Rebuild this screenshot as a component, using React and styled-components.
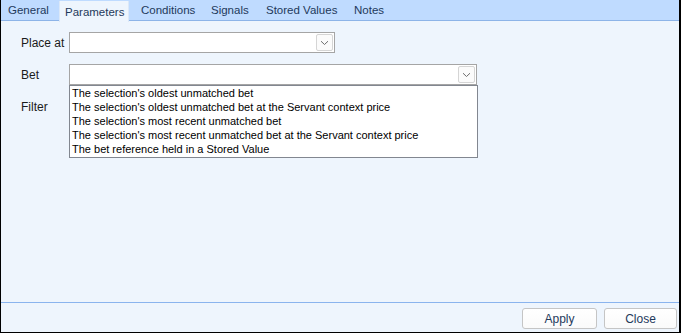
import React from "react";
import styled, { createGlobalStyle } from "styled-components";

const Global = createGlobalStyle`
  html, body { margin: 0; padding: 0; background: #ffffff; }
  * { box-sizing: border-box; }
`;

const Window = styled.div`
  width: 681px;
  height: 333px;
  display: flex;
  flex-direction: column;
  background: #eef5fd;
  border-left: 1px solid #000;
  border-right: 2px solid #000;
  border-bottom: 1px solid #000;
  font-family: "Liberation Sans", Arial, sans-serif;
  font-size: 12px;
  color: #000;
`;

const TabStrip = styled.div`
  display: flex;
  height: 21px;
  background: #bfdbff;
  border-bottom: 1px solid #8db4e8;
  flex-shrink: 0;
`;

const Tab = styled.div`
  width: ${(p) => p.$w}px;
  height: ${(p) => (p.$active ? 21 : 20)}px;
  margin-top: ${(p) => (p.$active ? 1 : 0)}px;
  display: flex;
  align-items: center;
  padding-left: ${(p) => p.$pl}px;
  font-size: 11.5px;
  color: #1e395b;
  background: ${(p) => (p.$active ? "#eef5fd" : "transparent")};
  border-left: ${(p) => (p.$active ? "1px solid #dbe8f8" : "none")};
  border-right: ${(p) => (p.$active ? "1px solid #dbe8f8" : "none")};
  white-space: nowrap;
`;

const Body = styled.div`
  flex: 1;
  display: flex;
  flex-direction: column;
  gap: 11px;
  padding: 11px 0 0 20px;
`;

const Row = styled.div`
  display: flex;
  align-items: center;
  height: 21px;
  position: relative;
`;

const Label = styled.div`
  width: 48px;
  flex-shrink: 0;
  color: #1a1a1a;
`;

const Select = styled.div`
  width: ${(p) => p.$w}px;
  height: 21px;
  background: #fff;
  border: 1px solid #a5a5a5;
  display: flex;
  justify-content: flex-end;
  align-items: center;
  padding-right: 1px;
`;

const DropButton = styled.div`
  width: 17px;
  height: 17px;
  border: 1px solid #d5d5d5;
  border-radius: 2px;
  background: #fbfbfb;
  display: flex;
  align-items: center;
  justify-content: center;
`;

const List = styled.div`
  position: absolute;
  left: 48px;
  top: 21px;
  width: 409px;
  background: #fff;
  border: 1px solid #828790;
  padding: 0 0 1px 2px;
  z-index: 2;
`;

const Item = styled.div`
  height: 14px;
  line-height: 14px;
  font-size: 11px;
  white-space: nowrap;
  color: #000;
`;

const Spacer = styled.div`
  height: 1px;
`;

const Footer = styled.div`
  height: 30px;
  flex-shrink: 0;
  border-top: 1px solid #8ab4ee;
  display: flex;
  justify-content: flex-end;
  gap: 7px;
  padding: 5px 2px 0 0;
`;

const Button = styled.button`
  width: ${(p) => p.$w}px;
  height: 21px;
  background: linear-gradient(#ffffff, #fafafa);
  border: 1px solid #c5c5c5;
  border-radius: 3px;
  font-family: "Liberation Sans", Arial, sans-serif;
  font-size: 12px;
  color: #1e395b;
  padding: 0;
`;

const Chevron = () => (
  <svg width="9" height="6" viewBox="0 0 9 6">
    <path d="M1 1.2 L4.5 4.5 L8 1.2" fill="none" stroke="#6d6d6d" strokeWidth="1" />
  </svg>
);

const tabs = [
  { t: "General", w: 58, pl: 7 },
  { t: "Parameters", w: 70, pl: 5, active: true },
  { t: "Conditions", w: 76, pl: 12 },
  { t: "Signals", w: 54, pl: 6 },
  { t: "Stored Values", w: 87, pl: 7 },
  { t: "Notes", w: 44, pl: 8 },
];

const items = [
  "The selection's oldest unmatched bet",
  "The selection's oldest unmatched bet at the Servant context price",
  "The selection's most recent unmatched bet",
  "The selection's most recent unmatched bet at the Servant context price",
  "The bet reference held in a Stored Value",
];

export default function App() {
  return (
    <>
      <Global />
      <Window>
        <TabStrip>
          {tabs.map((x) => (
            <Tab key={x.t} $w={x.w} $pl={x.pl} $active={x.active}>
              {x.t}
            </Tab>
          ))}
        </TabStrip>
        <Body>
          <Row>
            <Label>Place at</Label>
            <Select $w={266}>
              <DropButton>
                <Chevron />
              </DropButton>
            </Select>
          </Row>
          <Row>
            <Label>Bet</Label>
            <Select $w={408}>
              <DropButton>
                <Chevron />
              </DropButton>
            </Select>
            <List>
              {items.map((i) => (
                <Item key={i}>{i}</Item>
              ))}
            </List>
          </Row>
          <Row>
            <Label>Filter</Label>
          </Row>
          <Spacer />
        </Body>
        <Footer>
          <Button $w={75}>Apply</Button>
          <Button $w={73}>Close</Button>
        </Footer>
      </Window>
    </>
  );
}
